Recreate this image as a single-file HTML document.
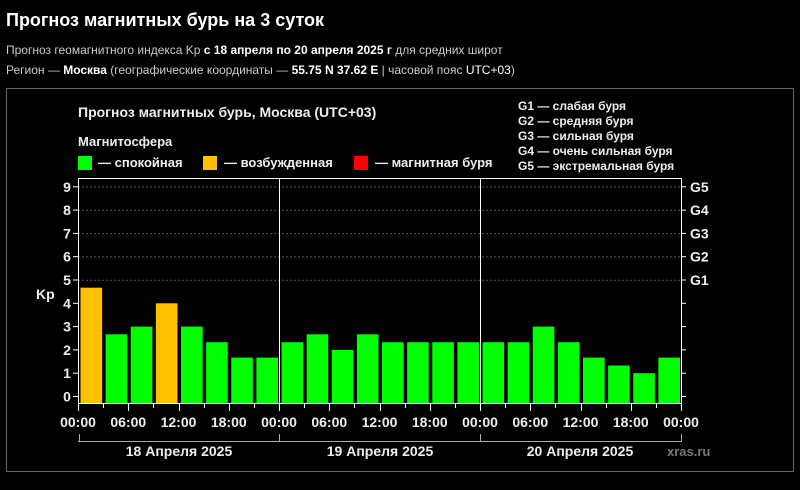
<!DOCTYPE html>
<html><head><meta charset="utf-8"><style>
body{margin:0;background:#000;width:800px;height:485px;overflow:hidden;font-family:"Liberation Sans",sans-serif;color:#fff}
</style></head><body>
<svg width="800" height="485" xmlns="http://www.w3.org/2000/svg" font-family="Liberation Sans, sans-serif">
<text x="6" y="26" font-size="18" font-weight="bold" fill="#fff">Прогноз магнитных бурь на 3 суток</text>
<text x="6" y="54" font-size="12" fill="#ccc">Прогноз геомагнитного индекса Kp <tspan font-weight="bold" fill="#fff">с 18 апреля по 20 апреля 2025 г</tspan> для средних широт</text>
<text x="6" y="74" font-size="12" fill="#ccc">Регион — <tspan font-weight="bold" fill="#fff">Москва</tspan> (географические координаты — <tspan font-weight="bold" fill="#fff">55.75 N 37.62 E</tspan> | часовой пояс <tspan fill="#fff">UTC+03</tspan>)</text>
<rect x="6.5" y="88.5" width="787" height="383" fill="none" stroke="#666"/>
<text x="78" y="117" font-size="14" font-weight="bold" fill="#eee">Прогноз магнитных бурь, Москва (UTC+03)</text>
<text x="78" y="146" font-size="13" font-weight="bold" fill="#eee">Магнитосфера</text>
<rect x="78" y="156" width="14" height="14" fill="#0f0"/>
<text x="98" y="167" font-size="13" font-weight="bold" fill="#eee">— спокойная</text>
<rect x="203" y="156" width="14" height="14" fill="#ffc000"/>
<text x="224" y="167" font-size="13" font-weight="bold" fill="#eee">— возбужденная</text>
<rect x="354" y="156" width="14" height="14" fill="#f00"/>
<text x="375" y="167" font-size="13" font-weight="bold" fill="#eee">— магнитная буря</text>
<g font-size="12" font-weight="bold" fill="#eee">
<text x="518" y="110">G1 — слабая буря</text>
<text x="518" y="125">G2 — средняя буря</text>
<text x="518" y="140">G3 — сильная буря</text>
<text x="518" y="155">G4 — очень сильная буря</text>
<text x="518" y="170">G5 — экстремальная буря</text>
</g>
<g stroke="#555" stroke-dasharray="2,2">
<line x1="78" x2="681" y1="187" y2="187"/><line x1="78" x2="681" y1="210.3" y2="210.3"/><line x1="78" x2="681" y1="233.6" y2="233.6"/><line x1="78" x2="681" y1="256.9" y2="256.9"/><line x1="78" x2="681" y1="280.2" y2="280.2"/>
</g>
<g id="bars"></g>
<g stroke="#fff" fill="none">
<line x1="78.5" y1="178" x2="78.5" y2="403"/><line x1="78" y1="178.5" x2="682" y2="178.5"/>
<line x1="681.5" y1="178" x2="681.5" y2="403"/><line x1="279.5" y1="178" x2="279.5" y2="411"/><line x1="480.5" y1="178" x2="480.5" y2="411"/>
<line x1="78" y1="403.5" x2="682" y2="403.5"/>
<line x1="78" y1="441.5" x2="682" y2="441.5" stroke="#aaa"/>
<line x1="79.5" y1="434" x2="79.5" y2="442" stroke="#aaa"/><line x1="279.5" y1="434" x2="279.5" y2="442" stroke="#aaa"/><line x1="480.5" y1="434" x2="480.5" y2="442" stroke="#aaa"/><line x1="681.5" y1="434" x2="681.5" y2="442" stroke="#aaa"/>
</g>
<g id="ax" font-size="14" font-weight="bold" fill="#eee"></g>
<text x="36" y="299" font-size="14" font-weight="bold" fill="#eee">Kp</text>
<g font-size="14" font-weight="bold" fill="#eee" text-anchor="middle">
<text x="179" y="456">18 Апреля 2025</text><text x="380" y="456">19 Апреля 2025</text><text x="580" y="456">20 Апреля 2025</text>
</g>
<text x="667" y="456" font-size="13" font-weight="bold" fill="#777">xras.ru</text>
<script>
var v=[4.67,2.67,3,4,3,2.33,1.67,1.67,2.33,2.67,2,2.67,2.33,2.33,2.33,2.33,2.33,2.33,3,2.33,1.67,1.33,1,1.67];
var ns="http://www.w3.org/2000/svg",b=document.getElementById('bars'),a=document.getElementById('ax');
function el(t,o,p){var e=document.createElementNS(ns,t);for(var k in o)e.setAttribute(k,o[k]);(p||b).appendChild(e);return e;}
var s=603/24,z=396.5,u=23.3;
v.forEach(function(k,i){var x=78+i*s+2.5,top=z-k*u;el('rect',{x:x,y:top,width:s-3.5,height:403-top,fill:k>=4?'#ffc000':'#0f0'});});
for(var i=0;i<=24;i++){var x=Math.round(78+i*s)+0.5;el('line',{x1:x,x2:x,y1:403,y2:(i%2?408:411),stroke:'#fff'});}
for(var i=0;i<=12;i++){var t=el('text',{x:78+i*2*s,y:427,'text-anchor':'middle'},a);t.textContent=['00:00','06:00','12:00','18:00'][i%4];}
for(var k=0;k<=9;k++){var y=z-k*u;el('line',{x1:73,x2:78,y1:y,y2:y,stroke:'#fff'});var t=el('text',{x:67,y:y+5,'text-anchor':'middle'},a);t.textContent=k;
el('line',{x1:681,x2:686,y1:y,y2:y,stroke:'#fff'});if(k>=5){var g=el('text',{x:690,y:y+5},a);g.textContent='G'+(k-4);}}
</script>
</svg>
</body></html>
